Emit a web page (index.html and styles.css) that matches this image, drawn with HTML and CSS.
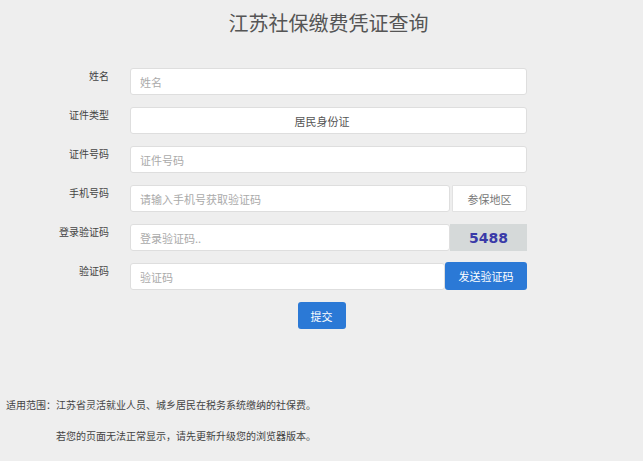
FILE: index.html
```html
<!DOCTYPE html>
<html lang="zh">
<head>
<meta charset="utf-8">
<title>江苏社保缴费凭证查询</title>
<link rel="stylesheet" href="styles.css">
</head>
<body>
<div class="page">
  <h1 class="title">江苏社保缴费凭证查询</h1>
  <form class="form">
    <div class="row">
      <label class="label">姓名</label>
      <div class="field"><input class="input" placeholder="姓名"></div>
    </div>
    <div class="row">
      <label class="label">证件类型</label>
      <div class="field"><div class="input select">居民身份证</div></div>
    </div>
    <div class="row">
      <label class="label">证件号码</label>
      <div class="field"><input class="input" placeholder="证件号码"></div>
    </div>
    <div class="row">
      <label class="label">手机号码</label>
      <div class="field group">
        <input class="input grow" placeholder="请输入手机号获取验证码">
        <div class="addon">参保地区</div>
      </div>
    </div>
    <div class="row">
      <label class="label">登录验证码</label>
      <div class="field group">
        <input class="input grow" placeholder="登录验证码..">
        <div class="captcha">5488</div>
      </div>
    </div>
    <div class="row">
      <label class="label">验证码</label>
      <div class="field group">
        <input class="input grow" placeholder="验证码">
        <button type="button" class="btn send">发送验证码</button>
      </div>
    </div>
    <div class="submit-row">
      <button type="button" class="btn submit">提交</button>
    </div>
  </form>
  <div class="notes">
    <p class="note first">适用范围：江苏省灵活就业人员、城乡居民在税务系统缴纳的社保费。</p>
    <p class="note second">若您的页面无法正常显示，请先更新升级您的浏览器版本。</p>
  </div>
</div>
</body>
</html>
```
FILE: styles.css
```css
html, body {
  margin: 0;
  padding: 0;
  background: #eeeeee;
  font-family: "Noto Sans CJK SC", "Microsoft YaHei", sans-serif;
  color: #555;
}
.page {
  width: 643px;
  height: 461px;
  overflow: hidden;
}
.title {
  margin: 0;
  padding-top: 9px;
  text-align: center;
  font-size: 20px;
  font-weight: normal;
  color: #555;
  line-height: 28px;
  padding-left: 14px;
}
.form {
  margin-top: 31px;
  display: flex;
  flex-direction: column;
  gap: 12px;
}
.row {
  display: flex;
  align-items: flex-start;
  height: 27px;
}
.label {
  width: 109px;
  text-align: right;
  font-size: 10px;
  line-height: 14px;
  color: #444;
  padding-top: 1px;
  flex: none;
}
.field {
  margin-left: 21px;
  width: 397px;
  height: 27px;
  display: flex;
}
.input {
  box-sizing: border-box;
  width: 100%;
  height: 27px;
  border: 1px solid #dedede;
  border-radius: 3px;
  background: #fff;
  padding: 0 9px;
  font-family: inherit;
  font-size: 11px;
  color: #555;
  outline: none;
}
.input::placeholder {
  color: #aaa;
}
.select {
  display: flex;
  align-items: center;
  justify-content: center;
  padding-right: 22px;
  color: #555;
}
.group .grow {
  flex: 1;
  min-width: 0;
}
.addon {
  box-sizing: border-box;
  width: 75px;
  margin-left: 2px;
  height: 27px;
  background: #fff;
  border: 1px solid #e2e2e2;
  border-radius: 0 3px 3px 0;
  display: flex;
  align-items: center;
  justify-content: center;
  font-size: 11px;
  color: #777;
  flex: none;
}
.captcha {
  width: 77px;
  height: 27px;
  background: #d5d9d9;
  color: #3a3aa8;
  font-family: "DejaVu Sans", sans-serif;
  font-weight: bold;
  font-size: 14px;
  display: flex;
  align-items: center;
  justify-content: center;
  flex: none;
}
.btn {
  border: none;
  border-radius: 3px;
  background: #2b79d6;
  color: #fff;
  font-family: inherit;
  font-size: 11px;
  cursor: pointer;
  padding: 0;
}
.send {
  width: 82px;
  height: 28px;
  margin-top: -1px;
  flex: none;
}
.submit-row {
  display: flex;
  justify-content: center;
}
.submit {
  width: 48px;
  height: 27px;
}
.notes {
  margin-top: 69px;
}
.note {
  margin: 0;
  font-size: 10px;
  line-height: 14px;
  color: #444;
}
.first {
  padding-left: 6px;
}
.second {
  margin-top: 17px;
  padding-left: 56px;
}
```
